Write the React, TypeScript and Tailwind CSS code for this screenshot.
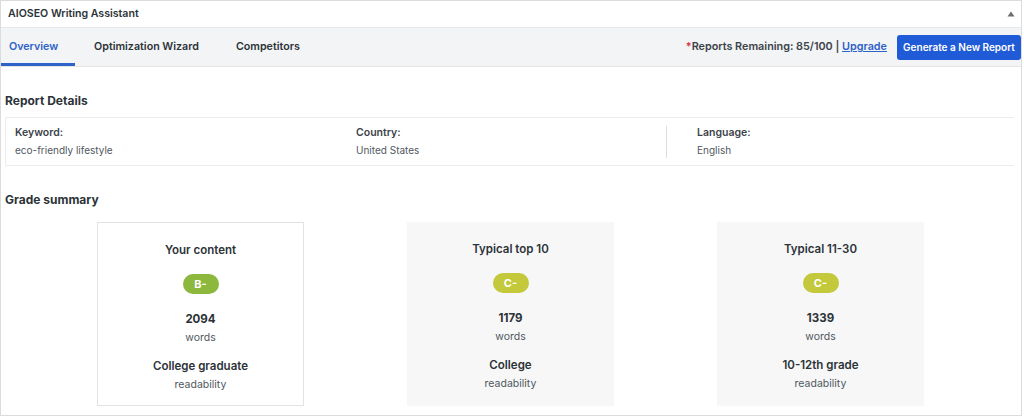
import React from "react";

const cards = [
  { title: "Your content", grade: "B-", color: "bg-[#8cb83e]", words: "2094", read: "College graduate", white: true },
  { title: "Typical top 10", grade: "C-", color: "bg-[#c3c93a]", words: "1179", read: "College", white: false },
  { title: "Typical 11-30", grade: "C-", color: "bg-[#c3c93a]", words: "1339", read: "10-12th grade", white: false },
];

export default function App() {
  return (
    <div className="w-[1024px] h-[417px] bg-white font-['Inter','Liberation_Sans',sans-serif] text-[#2c3338] overflow-hidden">
      <div className="w-[1022px] h-[416px] border border-[#dcdcde] flex flex-col">
        {/* header */}
        <div className="h-[27px] flex items-center justify-between pl-[7px] pr-[5px] border-b border-[#e8e8e8]">
          <span className="text-[10.6px] font-semibold">AIOSEO Writing Assistant</span>
          <svg width="8" height="6" viewBox="0 0 8 6" className="mr-[1px]">
            <path d="M4 0.5 L7.5 5.5 L0.5 5.5 Z" fill="#6b6f74" />
          </svg>
        </div>
        {/* tabs */}
        <div className="h-[39px] bg-[#f3f4f5] flex items-stretch justify-between border-b border-[#e4e5e7]">
          <div className="flex items-stretch text-[10.7px] font-semibold">
            <div className="w-[74px] pl-[8px] flex items-center text-[#2f62c9] border-b-[3px] border-[#2f62c9] pt-[3px]">Overview</div>
            <div className="ml-[19px] flex items-center">Optimization Wizard</div>
            <div className="ml-[37px] flex items-center">Competitors</div>
          </div>
          <div className="flex items-center">
            <span className="text-[10.8px] font-semibold text-[#3c434a]">
              <span className="text-[#d63638]">*</span>Reports Remaining: 85/100 |{" "}
              <a className="text-[#2f62c9] underline">Upgrade</a>
            </span>
            <button className="ml-[10px] h-[25px] w-[124px] rounded-[3px] bg-[#1f5bd6] text-white text-[10px] font-semibold">
              Generate a New Report
            </button>
          </div>
        </div>
        {/* report details */}
        <div className="pl-[4px] pr-[7px]">
          <div className="mt-[25px] text-[12px] font-bold">Report Details</div>
          <div className="mt-[7px] h-[49px] border border-[#ececec] border-r-0 flex items-center">
            <div className="w-[350px] pl-[9px]">
              <div className="text-[10.5px] font-semibold text-[#3c434a]">Keyword:</div>
              <div className="mt-[2px] text-[10px] text-[#50575e]">eco-friendly lifestyle</div>
            </div>
            <div className="w-[310px]">
              <div className="text-[10.5px] font-semibold text-[#3c434a]">Country:</div>
              <div className="mt-[2px] text-[10px] text-[#50575e]">United States</div>
            </div>
            <div className="w-px h-[32px] bg-[#dddddd]" />
            <div className="pl-[30px]">
              <div className="text-[10.5px] font-semibold text-[#3c434a]">Language:</div>
              <div className="mt-[2px] text-[10px] text-[#50575e]">English</div>
            </div>
          </div>
          <div className="mt-[25px] text-[12px] font-bold">Grade summary</div>
        </div>
        {/* cards */}
        <div className="mt-[13px] pl-[96px] flex gap-[103px]">
          {cards.map((c) => (
            <div
              key={c.title}
              className={`w-[207px] h-[184px] flex flex-col items-center pt-[19px] ${
                c.white ? "bg-white border border-[#e3e3e3]" : "bg-[#f7f7f7]"
              }`}
            >
              <div className="text-[11.5px] font-semibold">{c.title}</div>
              <div
                className={`mt-[15px] w-[36px] h-[20px] rounded-full ${c.color} text-white text-[11px] font-bold flex items-center justify-center`}
              >
                {c.grade}
              </div>
              <div className="mt-[17px] text-[11.5px] font-bold">{c.words}</div>
              <div className="mt-[1px] text-[10.5px] text-[#50575e]">words</div>
              <div className="mt-[13px] text-[11.5px] font-semibold">{c.read}</div>
              <div className="mt-[1px] text-[10.5px] text-[#50575e]">readability</div>
            </div>
          ))}
        </div>
      </div>
    </div>
  );
}
